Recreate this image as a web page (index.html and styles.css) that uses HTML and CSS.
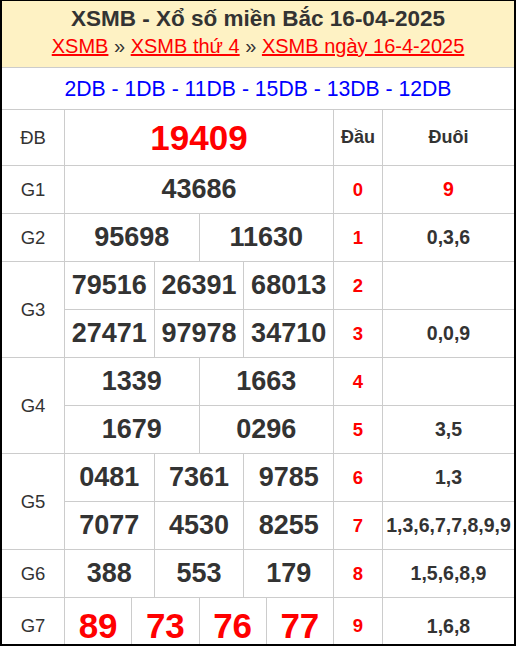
FILE: index.html
```html
<!DOCTYPE html>
<html lang="vi">
<head>
<meta charset="utf-8">
<title>XSMB 16-04-2025</title>
<link rel="stylesheet" href="styles.css">
</head>
<body>
<div class="box">
  <div class="head">
    <h1 class="title">XSMB - Xổ số miền Bắc 16-04-2025</h1>
    <div class="crumbs"><a href="#">XSMB</a> » <a href="#">XSMB thứ 4</a> » <a href="#">XSMB ngày 16-4-2025</a></div>
  </div>
  <div class="codes">2DB - 1DB - 11DB - 15DB - 13DB - 12DB</div>
  <div class="grid">
    <div class="cell lbl">ĐB</div>
    <div class="cell num s12 big">19409</div>
    <div class="cell th">Đầu</div>
    <div class="cell th">Đuôi</div>

    <div class="cell lbl">G1</div>
    <div class="cell num s12">43686</div>
    <div class="cell dau">0</div>
    <div class="cell duoi red">9</div>

    <div class="cell lbl">G2</div>
    <div class="cell num s6">95698</div>
    <div class="cell num s6">11630</div>
    <div class="cell dau">1</div>
    <div class="cell duoi">0,3,6</div>

    <div class="cell lbl r2">G3</div>
    <div class="cell num s4">79516</div>
    <div class="cell num s4">26391</div>
    <div class="cell num s4">68013</div>
    <div class="cell dau">2</div>
    <div class="cell duoi"></div>
    <div class="cell num s4">27471</div>
    <div class="cell num s4">97978</div>
    <div class="cell num s4">34710</div>
    <div class="cell dau">3</div>
    <div class="cell duoi">0,0,9</div>

    <div class="cell lbl r2">G4</div>
    <div class="cell num s6">1339</div>
    <div class="cell num s6">1663</div>
    <div class="cell dau">4</div>
    <div class="cell duoi"></div>
    <div class="cell num s6">1679</div>
    <div class="cell num s6">0296</div>
    <div class="cell dau">5</div>
    <div class="cell duoi">3,5</div>

    <div class="cell lbl r2">G5</div>
    <div class="cell num s4">0481</div>
    <div class="cell num s4">7361</div>
    <div class="cell num s4">9785</div>
    <div class="cell dau">6</div>
    <div class="cell duoi">1,3</div>
    <div class="cell num s4">7077</div>
    <div class="cell num s4">4530</div>
    <div class="cell num s4">8255</div>
    <div class="cell dau">7</div>
    <div class="cell duoi">1,3,6,7,7,8,9,9</div>

    <div class="cell lbl">G6</div>
    <div class="cell num s4">388</div>
    <div class="cell num s4">553</div>
    <div class="cell num s4">179</div>
    <div class="cell dau">8</div>
    <div class="cell duoi">1,5,6,8,9</div>

    <div class="cell lbl last">G7</div>
    <div class="cell num s3 big last">89</div>
    <div class="cell num s3 big last">73</div>
    <div class="cell num s3 big last">76</div>
    <div class="cell num s3 big last">77</div>
    <div class="cell dau last">9</div>
    <div class="cell duoi last">1,6,8</div>
  </div>
</div>
</body>
</html>
```

FILE: styles.css
```css
* { box-sizing: border-box; }
html, body { margin: 0; padding: 0; background: #fff; }
body { font-family: "Liberation Sans", Arial, sans-serif; color: #333; }

.box {
  width: 516px;
  height: 646px;
  border-top: 1px solid #000;
  border-left: 2px solid #000;
  border-right: 2px solid #000;
  border-bottom: 2px solid #000;
  display: flex;
  flex-direction: column;
}

.head {
  height: 67px;
  background: #fef2c4;
  border-bottom: 1px solid #ccc;
  padding-top: 5px;
  text-align: center;
}
.title {
  margin: 0;
  font-size: 22.5px;
  line-height: 26px;
  font-weight: bold;
  color: #333;
}
.crumbs {
  margin-top: 1px;
  font-size: 20px;
  line-height: 26px;
  color: #333;
}
.crumbs a { color: #f00; text-decoration: underline; }

.codes {
  height: 42px;
  border-bottom: 1px solid #ccc;
  display: flex;
  align-items: center;
  justify-content: center;
  font-size: 21.2px;
  color: #00f;
}

.grid {
  flex: 1;
  display: grid;
  grid-template-columns: 62px repeat(12, 1fr) 48px 131px;
  grid-template-rows: 55px repeat(9, 47px) 46px;
  gap: 1px;
  background: #ccc;
}
.cell {
  background: #fff;
  display: flex;
  align-items: center;
  justify-content: center;
  white-space: nowrap;
}
.lbl { font-size: 18.5px; color: #333; }
.r2 { grid-row: span 2; }
.num { font-weight: bold; font-size: 27px; color: #333; }
.big { font-size: 35px; color: #f00; }
.s12 { grid-column: span 12; }
.s6 { grid-column: span 6; }
.s4 { grid-column: span 4; }
.s3 { grid-column: span 3; }
.th { font-weight: bold; font-size: 18px; color: #333; }
.dau { font-weight: bold; font-size: 18.5px; color: #f00; }
.duoi { font-weight: bold; font-size: 19.5px; color: #333; }
.duoi.red { color: #f00; }
.last { padding-top: 10px; }
```
